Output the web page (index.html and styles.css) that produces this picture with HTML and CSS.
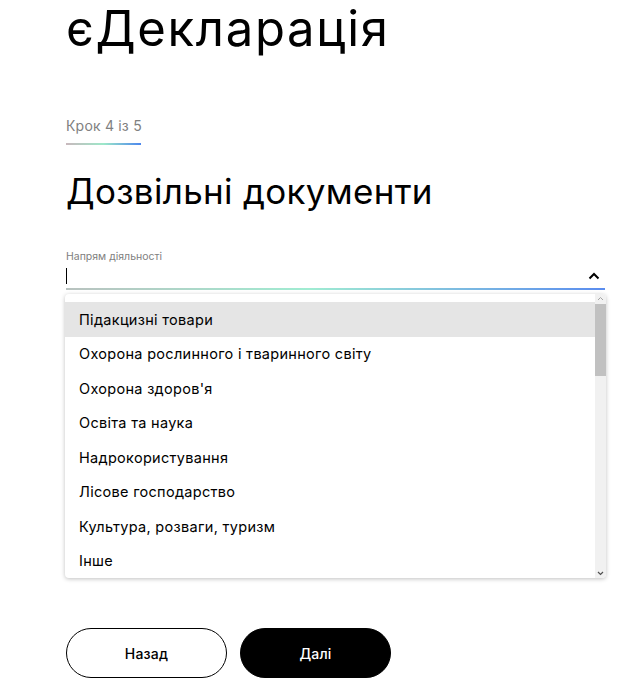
FILE: index.html
```html
<!DOCTYPE html>
<html lang="uk">
<head>
<meta charset="utf-8">
<link rel="stylesheet" href="styles.css">
</head>
<body>
<main class="page">
  <h1 class="title">єДекларація</h1>
  <div class="step">
    <span class="step-text">Крок 4 із 5</span>
    <span class="step-line"></span>
  </div>
  <h2 class="subtitle">Дозвільні документи</h2>
  <div class="field">
    <label class="label">Напрям діяльності</label>
    <div class="input-row">
      <span class="caret"></span>
      <svg class="chevron" width="12" height="8" viewBox="0 0 12 8"><path d="M1.5 6.5 L6 2 L10.5 6.5" fill="none" stroke="#000" stroke-width="2"/></svg>
    </div>
    <div class="underline"></div>
    <div class="dropdown">
      <ul class="options">
        <li class="option active">Підакцизні товари</li>
        <li class="option">Охорона рослинного і тваринного світу</li>
        <li class="option">Охорона здоров'я</li>
        <li class="option">Освіта та наука</li>
        <li class="option">Надрокористування</li>
        <li class="option">Лісове господарство</li>
        <li class="option">Культура, розваги, туризм</li>
        <li class="option">Інше</li>
      </ul>
      <div class="scrollbar">
        <svg class="arrow" width="11" height="10" viewBox="0 0 11 10"><path d="M3 6 L5.5 3.5 L8 6" fill="none" stroke="#a3a3a3" stroke-width="1"/></svg>
        <div class="track"><div class="thumb"></div></div>
        <svg class="arrow" width="11" height="10" viewBox="0 0 11 10"><path d="M3 4 L5.5 6.5 L8 4" fill="none" stroke="#505050" stroke-width="1.2"/></svg>
      </div>
    </div>
  </div>
  <div class="actions">
    <button class="btn btn-outline">Назад</button>
    <button class="btn btn-solid">Далі</button>
  </div>
</main>
</body>
</html>
```
FILE: styles.css
```css
* { box-sizing: border-box; }
body {
  margin: 0;
  font-family: Inter, "Liberation Sans", Arial, sans-serif;
  color: #000;
  background: #fff;
}
.page {
  padding: 0 32px 0 66px;
  width: 637px;
}
.title {
  margin: 0;
  padding-top: 1px;
  font-size: 49px;
  font-weight: 400;
  line-height: 56px;
  letter-spacing: 1.7px;
}
.step {
  margin-top: 61px;
  display: flex;
  flex-direction: column;
  align-items: flex-start;
}
.step-text {
  font-size: 14px;
  line-height: 16px;
  letter-spacing: 0.2px;
  color: #808080;
}
.step-line {
  margin-top: 9px;
  width: 75px;
  height: 2px;
  background: linear-gradient(90deg, #c9b8bd 0%, #9de8c9 50%, #4b86ee 100%);
}
.subtitle {
  margin: 24px 0 0;
  font-size: 35px;
  font-weight: 400;
  line-height: 44px;
  letter-spacing: 0.3px;
}
.field {
  position: relative;
  margin-top: 38px;
  width: 539px;
}
.label {
  display: block;
  font-size: 10.5px;
  line-height: 12px;
  color: #808080;
}
.input-row {
  height: 25px;
  display: flex;
  align-items: center;
  justify-content: space-between;
}
.caret {
  width: 1px;
  height: 16px;
  background: #000;
}
.chevron { margin-right: 5px; }
.underline {
  height: 2px;
  background: linear-gradient(90deg, #b9c2bf 0%, #a0ecd2 45%, #5a8cef 100%);
}
.dropdown {
  position: absolute;
  left: -1px;
  top: 43px;
  width: 541px;
  height: 284px;
  display: flex;
  background: #fff;
  border-radius: 4px;
  box-shadow: 0 1px 4px rgba(0,0,0,0.25);
  overflow: hidden;
}
.options {
  list-style: none;
  margin: 0;
  padding: 8px 0 0;
  flex: 1;
}
.option {
  height: 34.5px;
  display: flex;
  align-items: center;
  padding-left: 14px;
  font-size: 14.5px;
  letter-spacing: 0.3px;
  color: #000;
}
.option.active { background: #e5e5e5; }
.scrollbar {
  width: 11px;
  display: flex;
  flex-direction: column;
  background: #f1f1f1;
}
.arrow { display: block; flex: none; }
.track { flex: 1; }
.thumb {
  height: 72px;
  background: #c1c1c1;
}
.actions {
  margin-top: 338px;
  display: flex;
  gap: 13px;
}
.btn {
  height: 50px;
  border-radius: 25px;
  font-family: inherit;
  font-size: 14px;
  font-weight: 500;
  letter-spacing: 0.2px;
  border: 1.5px solid #000;
}
.btn-outline { width: 161px; background: #fff; color: #000; }
.btn-solid { width: 151px; background: #000; color: #fff; }
```
